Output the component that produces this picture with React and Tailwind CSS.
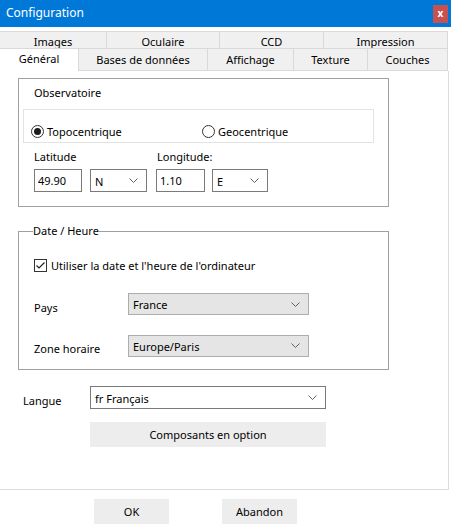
const font = { fontFamily: '"Noto Sans", "Open Sans", sans-serif' };

const row1 = [
  { label: "Images", w: "w-[107px]" },
  { label: "Oculaire", w: "w-[113px]" },
  { label: "CCD", w: "w-[104px]" },
  { label: "Impression", w: "w-[124px]" },
];

const row2 = [
  { label: "Bases de données", w: "w-[129px]" },
  { label: "Affichage", w: "w-[86px]" },
  { label: "Texture", w: "w-[74px]" },
  { label: "Couches", w: "w-[80px]" },
];

function Chevron() {
  return (
    <svg width="9" height="5" viewBox="0 0 9 5" className="shrink-0">
      <path d="M0.5 0.5 L4.5 4.5 L8.5 0.5" fill="none" stroke="#606060" strokeWidth="1" />
    </svg>
  );
}

function Select({ value, gray, className }) {
  return (
    <div
      className={`flex items-center justify-between pl-[4px] pr-[8px] border ${
        gray ? "bg-[#e5e5e5] border-[#adadad]" : "bg-white border-[#7a7a7a]"
      } ${className}`}
    >
      <span className="leading-none pt-[1px]">{value}</span>
      <Chevron />
    </div>
  );
}

function Radio({ checked, label }) {
  return (
    <div className="flex items-center gap-[3px]">
      <span className="w-[13px] h-[13px] rounded-full border border-[#333] flex items-center justify-center">
        {checked && <span className="w-[7px] h-[7px] rounded-full bg-[#1a1a1a]" />}
      </span>
      <span className="leading-[16px] pt-[1px]">{label}</span>
    </div>
  );
}

export default function App() {
  return (
    <div style={font} className="w-[451px] h-[532px] bg-white text-[11px] text-black flex flex-col overflow-hidden">
      {/* barre de titre */}
      <div className="h-[27px] bg-[#0078d7] flex items-center justify-between pl-[6px] pr-[3px]">
        <span className="text-white text-[12px] leading-none pb-[1px]">Configuration</span>
        <div className="w-[15px] h-[18px] bg-[#c75050] flex items-center justify-center text-white text-[10px] font-bold leading-none pb-[2px] mt-[1px]">
          x
        </div>
      </div>

      {/* onglets */}
      <div className="mt-[4px] flex h-[17px]">
        {row1.map((t) => (
          <div
            key={t.label}
            className={`${t.w} h-full bg-[#f0f0f0] border-t border-r border-[#d9d9d9] flex items-center justify-center leading-none pt-[2px]`}
          >
            {t.label}
          </div>
        ))}
      </div>
      <div className="flex h-[23px]">
        <div className="w-[79px] h-full bg-white border-t border-r border-[#d9d9d9] flex items-center justify-center leading-none pb-[3px]">
          Général
        </div>
        {row2.map((t) => (
          <div
            key={t.label}
            className={`${t.w} h-full bg-[#f0f0f0] border-t border-b border-r border-[#d9d9d9] flex items-center justify-center leading-none`}
          >
            {t.label}
          </div>
        ))}
      </div>

      {/* panneau */}
      <div className="w-[449px] h-[419px] border-r border-b border-[#dcdcdc] flex flex-col">
        {/* Observatoire */}
        <div className="ml-[18px] mt-[7px] w-[371px] h-[129px] border border-[#a0a0a0] flex flex-col">
          <div className="pl-[15px] pt-[6px] leading-[16px] h-[22px]">Observatoire</div>
          <div className="ml-[4px] mt-[8px] w-[351px] h-[34px] border border-[#e3e3e3] flex items-end pb-[2px] pl-[7px]">
            <div className="w-[171px]">
              <Radio checked label="Topocentrique" />
            </div>
            <Radio label="Geocentrique" />
          </div>
          <div className="flex pl-[15px] mt-[6px] gap-[9px]">
            <div className="flex flex-col w-[113px]">
              <span className="leading-[16px]">Latitude</span>
              <div className="flex mt-[4px] gap-[8px]">
                <div className="w-[48px] h-[23px] border border-[#7a7a7a] pl-[3px] flex items-center leading-none">49.90</div>
                <Select value="N" className="w-[57px] h-[23px]" />
              </div>
            </div>
            <div className="flex flex-col">
              <span className="leading-[16px] pl-[1px]">Longitude:</span>
              <div className="flex mt-[4px] gap-[7px]">
                <div className="w-[49px] h-[23px] border border-[#7a7a7a] pl-[3px] flex items-center leading-none">1.10</div>
                <Select value="E" className="w-[56px] h-[23px]" />
              </div>
            </div>
          </div>
        </div>

        {/* Date / Heure */}
        <fieldset className="ml-[18px] mt-[16px] w-[371px] h-[147px] border border-[#a0a0a0] pl-[15px]">
          <legend className="leading-[16px] -ml-[1px]">Date / Heure</legend>
          <div className="flex items-center gap-[4px] mt-[18px]">
            <span className="w-[13px] h-[13px] border border-[#333] flex items-center justify-center">
              <svg width="11" height="11" viewBox="0 0 11 11">
                <path d="M1.5 5.5 L4 8 L9.5 2.5" fill="none" stroke="#222" strokeWidth="1.2" />
              </svg>
            </span>
            <span className="leading-[16px] pt-[1px]">Utiliser la date et l'heure de l'ordinateur</span>
          </div>
          <div className="flex items-center mt-[18px]">
            <span className="w-[94px] leading-[16px] pt-[8px]">Pays</span>
            <Select gray value="France" className="w-[181px] h-[22px]" />
          </div>
          <div className="flex items-center mt-[18px]">
            <span className="w-[94px] leading-[16px] pt-[7px]">Zone horaire</span>
            <Select gray value="Europe/Paris" className="w-[181px] h-[22px]" />
          </div>
        </fieldset>

        {/* Langue */}
        <div className="flex items-center mt-[16px] pl-[23px]">
          <span className="w-[67px] leading-[16px] pt-[7px]">Langue</span>
          <Select value="fr Français" className="w-[236px] h-[23px]" />
        </div>
        <div className="ml-[90px] mt-[13px] w-[236px] h-[25px] bg-[#ededed] flex items-center justify-center leading-none">
          Composants en option
        </div>
      </div>

      {/* boutons */}
      <div className="flex mt-[9px] pl-[94px] gap-[53px]">
        <div className="w-[75px] h-[25px] bg-[#ededed] flex items-center justify-center leading-none">OK</div>
        <div className="w-[75px] h-[25px] bg-[#ededed] flex items-center justify-center leading-none">Abandon</div>
      </div>
    </div>
  );
}
